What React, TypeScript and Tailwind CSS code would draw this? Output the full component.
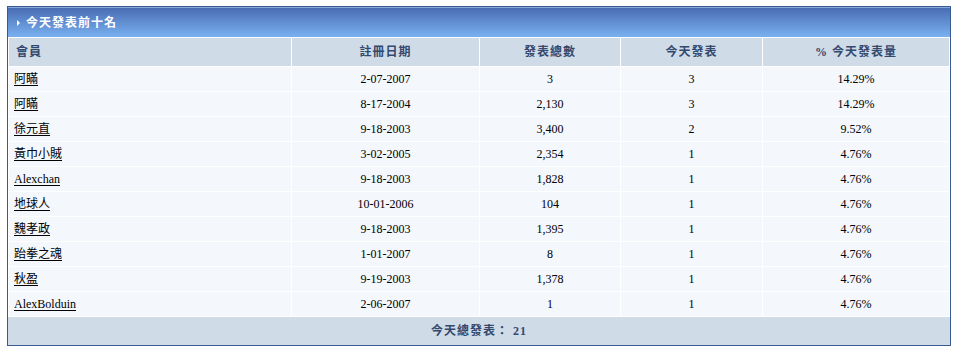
const rows = [
  { name: "阿瞞", date: "2-07-2007", total: "3", today: "3", pct: "14.29%" },
  { name: "阿瞞", date: "8-17-2004", total: "2,130", today: "3", pct: "14.29%" },
  { name: "徐元直", date: "9-18-2003", total: "3,400", today: "2", pct: "9.52%" },
  { name: "黃巾小賊", date: "3-02-2005", total: "2,354", today: "1", pct: "4.76%" },
  { name: "Alexchan", date: "9-18-2003", total: "1,828", today: "1", pct: "4.76%" },
  { name: "地球人", date: "10-01-2006", total: "104", today: "1", pct: "4.76%" },
  { name: "魏孝政", date: "9-18-2003", total: "1,395", today: "1", pct: "4.76%" },
  { name: "跆拳之魂", date: "1-01-2007", total: "8", today: "1", pct: "4.76%" },
  { name: "秋盈", date: "9-19-2003", total: "1,378", today: "1", pct: "4.76%" },
  { name: "AlexBolduin", date: "2-06-2007", total: "1", today: "1", pct: "4.76%" },
];

const font = "font-['Liberation_Serif','Noto_Sans_CJK_TC',serif]";

export default function App() {
  return (
    <div className={`min-h-[355px] bg-white pl-[7px] pt-[6px] text-[12px] ${font}`}>
      <div className="w-[944px] border border-[#3a5a94] bg-white">
        <div className="flex h-[30px] items-center gap-[6px] border-t border-[#8aa9d8] bg-gradient-to-b from-[#4a6db4] to-[#7ab1f0] pl-[9px] text-[12px] font-bold tracking-[1px] text-white">
          <span className="h-0 w-0 border-y-[3px] border-l-[3px] border-y-transparent border-l-white" />
          <span>今天發表前十名</span>
        </div>
        <table className="w-full border-separate border-spacing-[1px] bg-white">
          <thead>
            <tr className="h-[28px] bg-[#d0dbe8] font-bold tracking-[1px] text-[#34496e]">
              <th className="w-[282px] pl-[7px] text-left">會員</th>
              <th className="w-[187px] text-center">註冊日期</th>
              <th className="w-[140px] text-center">發表總數</th>
              <th className="w-[141px] text-center">今天發表</th>
              <th className="w-[186px] text-center">% 今天發表量</th>
            </tr>
          </thead>
          <tbody>
            {rows.map((r, i) => (
              <tr key={i} className="h-[24px] bg-[#f4f7fc] text-black">
                <td className="pl-[5px]">
                  <a href="#" className="underline underline-offset-2">
                    {r.name}
                  </a>
                </td>
                <td className="text-center">{r.date}</td>
                <td className="text-center">{r.total}</td>
                <td className="text-center">{r.today}</td>
                <td className="text-center">{r.pct}</td>
              </tr>
            ))}
          </tbody>
        </table>
        <div className="flex h-[28px] items-center justify-center bg-[#d0dbe8] font-bold tracking-[1px] text-[#34496e]">
          今天總發表： 21
        </div>
      </div>
    </div>
  );
}
